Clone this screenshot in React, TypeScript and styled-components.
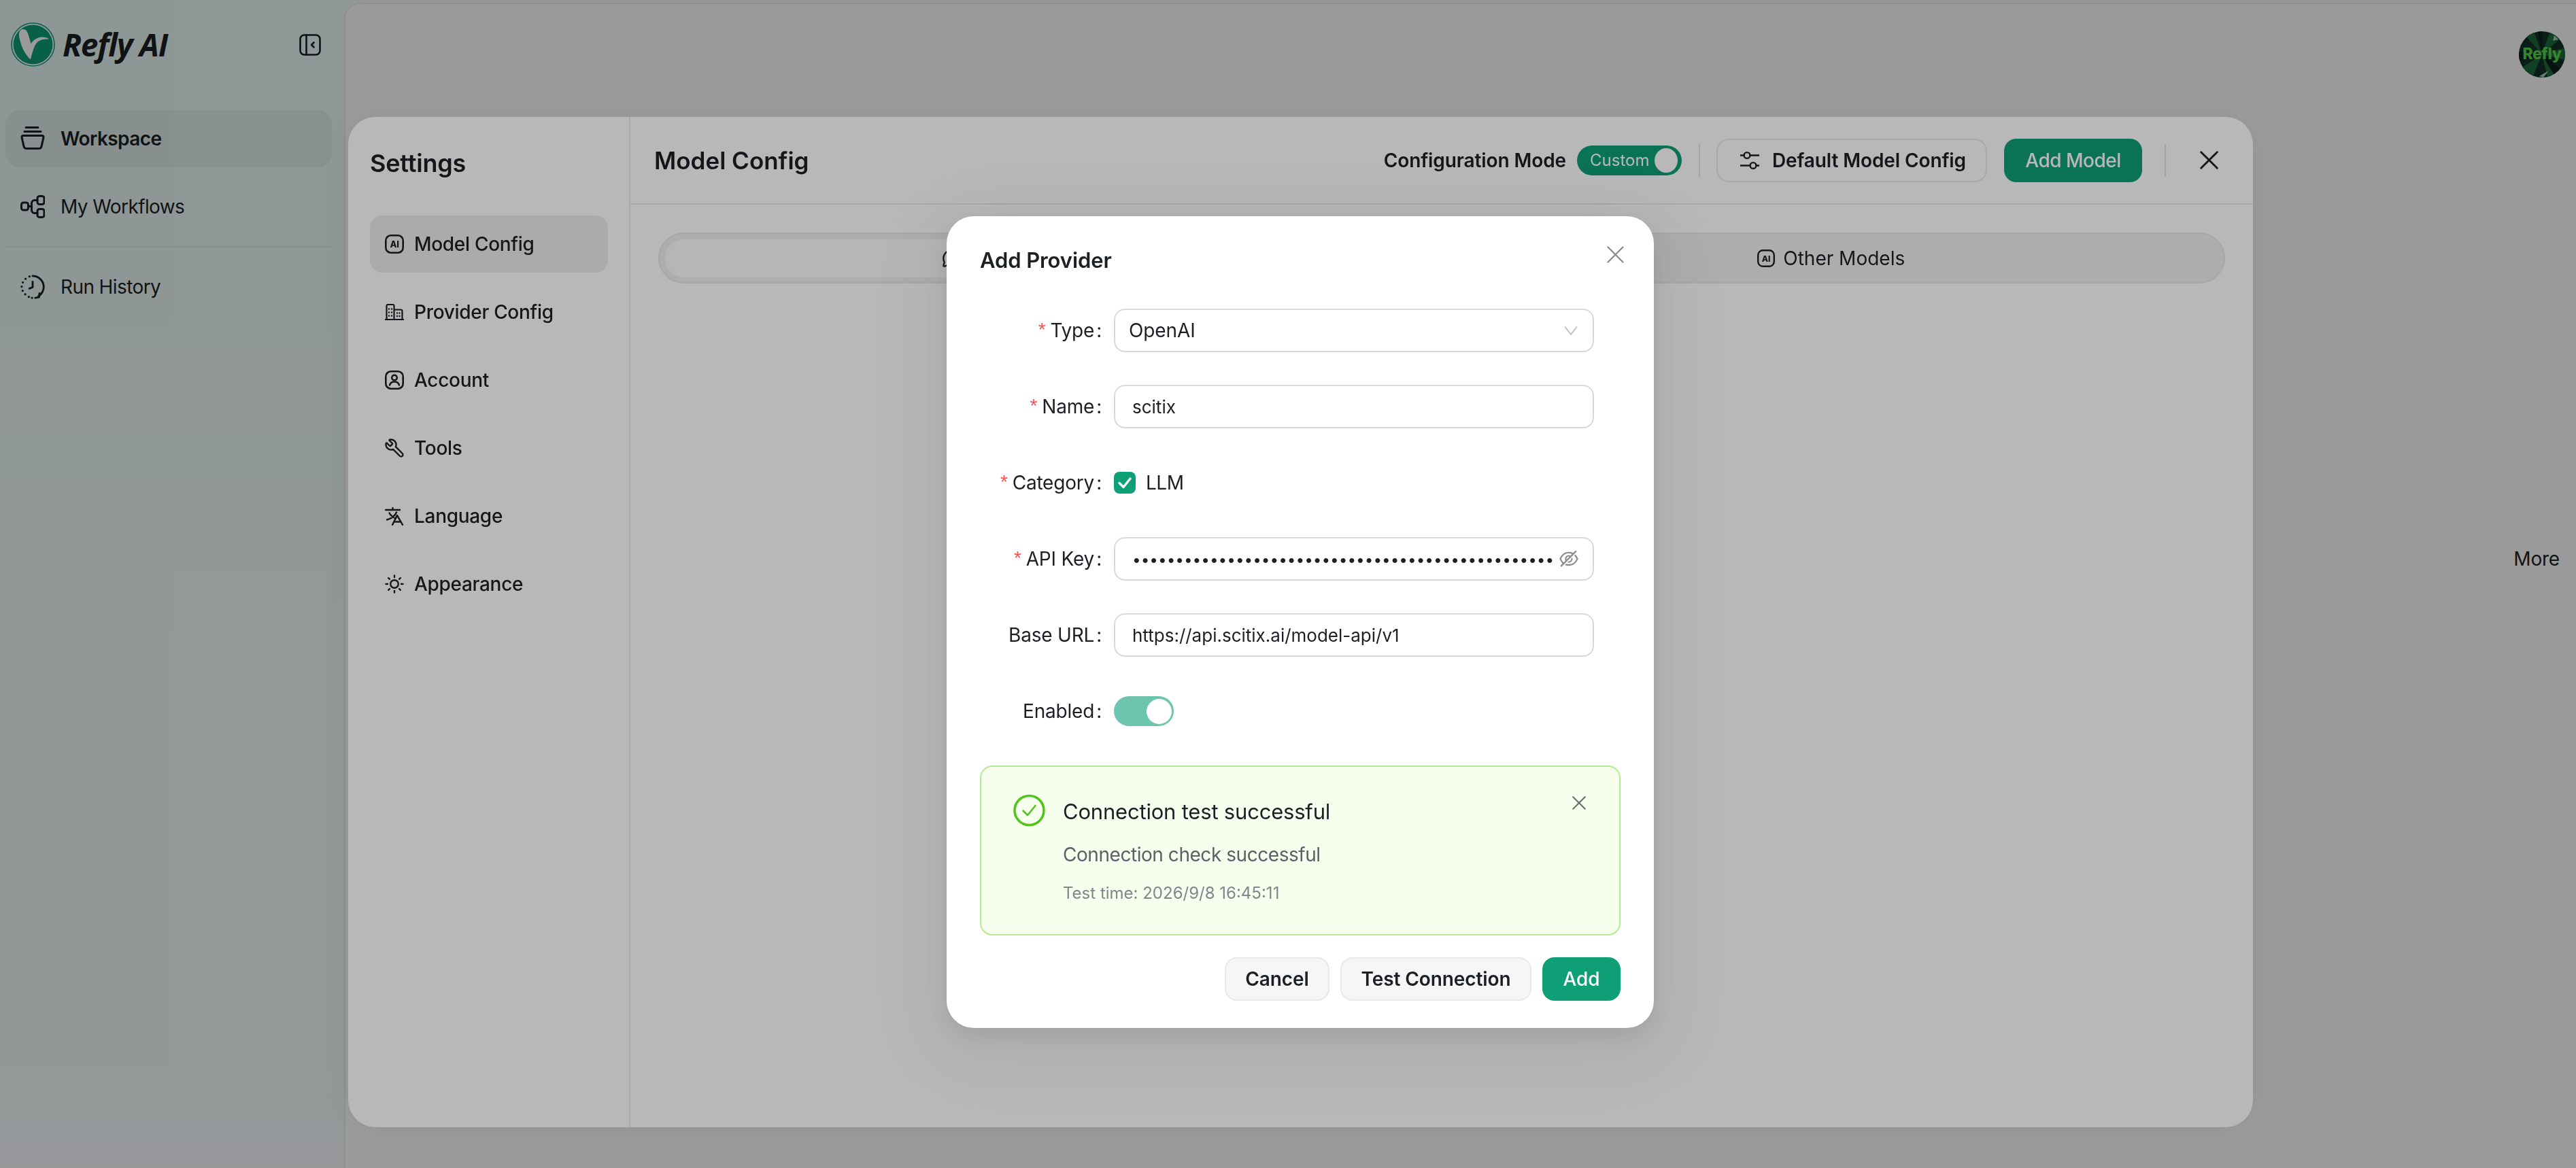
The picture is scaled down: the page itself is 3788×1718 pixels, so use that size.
import React from "react";
import styled, { createGlobalStyle } from "styled-components";
import { Wrench, MessageCircle } from "lucide-react";
import { AiOutlineEyeInvisible } from "react-icons/ai";

const Global = createGlobalStyle`
  html, body { margin: 0; padding: 0; width: 3788px; height: 1718px; overflow: hidden; background: #fff; }
  body { font-family: Inter, "Liberation Sans", sans-serif; color: #1c1f23; -webkit-font-smoothing: antialiased; }
  * { box-sizing: border-box; }
`;

const Page = styled.div`
  width: 3788px;
  height: 1718px;
  display: flex;
  background: linear-gradient(180deg, #e9fbf8 0%, #f3fbfb 60%, #f7fbfd 100%) 0 0 / 530px 100% no-repeat, #f9f9f9;
`;
const Sidebar = styled.aside`
  width: 506px;
  flex: none;
  display: flex;
  flex-direction: column;
  padding: 33px 18px 0 8px;
`;
const Brand = styled.div`
  display: flex;
  align-items: center;
  height: 65px;
  padding-left: 8px;
  margin-bottom: 64px;
`;
const BrandName = styled.span`
  margin-left: 11px;
  font-family: "Open Sans", sans-serif;
  font-style: italic;
  font-weight: 700;
  font-size: 46px;
  letter-spacing: -1.2px;
  line-height: 65px;
  color: #1c1f23;
`;
const Collapse = styled.span`
  margin-left: auto;
  margin-right: 16px;
  display: flex;
`;
const NavItem = styled.div<{ $active?: boolean }>`
  height: 84px;
  border-radius: 20px;
  display: flex;
  align-items: center;
  gap: 23px;
  padding-left: 22px;
  font-size: 28px;
  letter-spacing: -0.6px;
  font-weight: ${(p) => (p.$active ? 600 : 400)};
  background: ${(p) => (p.$active ? "#e0eeed" : "transparent")};
  margin-bottom: 16px;
`;
const NavIconBox = styled.span`
  width: 36px;
  display: flex;
  justify-content: center;
`;
const NavDivider = styled.div`
  height: 2px;
  background: #e3ecec;
  margin: 0 0 16px;
`;
const Main = styled.main`
  flex: 1;
  margin-top: 4px;
  border-top: 2px solid #ebebeb;
  border-left: 2px solid #ebebeb;
  border-top-left-radius: 24px;
  background: #fff;
  display: flex;
  flex-direction: column;
  align-items: flex-end;
  padding: 40px 16px 0 0;
`;
const AvatarSvg = styled.svg`
  width: 68px;
  height: 68px;
  display: block;
`;
const More = styled.div`
  margin-top: 690px;
  margin-right: 8px;
  font-size: 28px;
  line-height: 36px;
  letter-spacing: -0.2px;
`;

const Mask = styled.div<{ $alpha: number }>`
  position: fixed;
  inset: 0;
  background: rgba(0, 0, 0, ${(p) => p.$alpha});
`;
const Settings = styled.section`
  position: absolute;
  left: 512px;
  top: 172px;
  width: 2801px;
  height: 1486px;
  background: #fff;
  border-radius: 40px;
  display: flex;
  box-shadow: 0 0 60px rgba(0, 0, 0, 0.06);
  overflow: hidden;
`;
const SettingsNav = styled.nav`
  width: 415px;
  flex: none;
  border-right: 2px solid #e9e9e9;
  padding: 46px 31px 0 32px;
`;
const SettingsTitle = styled.h2`
  margin: 0 0 55px;
  font-size: 36px;
  line-height: 44px;
  font-weight: 600;
  letter-spacing: -0.2px;
`;
const SettingsItem = styled.div<{ $active?: boolean }>`
  height: 84px;
  border-radius: 18px;
  margin-bottom: 16px;
  display: flex;
  align-items: center;
  gap: 15px;
  padding-left: 22px;
  font-size: 28px;
  font-weight: 500;
  letter-spacing: -0.3px;
  background: ${(p) => (p.$active ? "#eeeeee" : "transparent")};
`;
const IconBox = styled.span`
  width: 28px;
  display: flex;
  align-items: center;
  justify-content: center;
`;
const MirroredIcon = styled.span`
  display: flex;
  transform: scaleX(-1);
`;
const Content = styled.div`
  flex: 1;
  min-width: 0;
  display: flex;
  flex-direction: column;
`;
const Header = styled.header`
  height: 129px;
  flex: none;
  border-bottom: 2px solid #e9e9e9;
  display: flex;
  align-items: center;
  padding: 0 51px 0 35px;
`;
const HeaderTitle = styled.h1`
  margin: 0 auto 0 0;
  font-size: 35px;
  font-weight: 600;
  line-height: 44px;
`;
const ModeLabel = styled.span`
  font-size: 28px;
  font-weight: 600;
  letter-spacing: -0.1px;
  margin-right: 16px;
`;
const ModeSwitch = styled.span`
  width: 154px;
  height: 44px;
  border-radius: 22px;
  background: #0e9f77;
  display: flex;
  align-items: center;
  justify-content: space-between;
  padding: 0 6px 0 19px;
  color: #fff;
  font-size: 24px;
`;
const Knob = styled.span`
  width: 34px;
  height: 36px;
  border-radius: 50%;
  background: #fff;
`;
const VRule = styled.span<{ $ml: number; $mr: number }>`
  width: 2px;
  height: 48px;
  background: #e3e3e3;
  margin: 0 ${(p) => p.$mr}px 0 ${(p) => p.$ml}px;
`;
const OutlineButton = styled.button`
  height: 64px;
  width: 398px;
  padding: 0 0 0 4px;
  border: 2px solid #e9e9e9;
  border-radius: 18px;
  background: #fff;
  display: flex;
  align-items: center;
  justify-content: center;
  gap: 19px;
  font: 600 28px Inter, sans-serif;
  letter-spacing: -0.1px;
  color: #1c1f23;
  margin-right: 25px;
`;
const PrimaryHeaderButton = styled.button`
  height: 64px;
  width: 203px;
  padding: 0;
  border: 0;
  border-radius: 18px;
  background: #0e9f77;
  color: #fff;
  font: 500 28px Inter, sans-serif;
  letter-spacing: -0.5px;
`;
const Tabs = styled.div`
  margin: 41px 41px 0 41px;
  height: 75px;
  border: 2px solid #e8e8e8;
  border-radius: 38px;
  background: #f0f0f0;
  display: flex;
  align-items: center;
  padding: 0 8px;
`;
const Tab = styled.div<{ $active?: boolean }>`
  flex: 1;
  height: 56px;
  border-radius: 28px;
  background: ${(p) => (p.$active ? "#fcfcfc" : "transparent")};
  display: flex;
  align-items: center;
  justify-content: center;
  gap: ${(p) => (p.$active ? 17 : 12)}px;
  padding-left: ${(p) => (p.$active ? 0 : 7)}px;
  font-size: 28px;
`;
const TabSpacer = styled.span`
  width: 279px;
`;

const Dialog = styled.div`
  position: absolute;
  left: 1392px;
  top: 318px;
  width: 1040px;
  height: 1194px;
  background: #fff;
  border-radius: 40px;
  padding: 43px 49px 40px;
  box-shadow: 0 12px 32px rgba(0, 0, 0, 0.08), 0 24px 96px 32px rgba(0, 0, 0, 0.05);
`;
const DialogTitle = styled.h3`
  margin: 0 0 49px;
  font-size: 31px;
  line-height: 44px;
  font-weight: 600;
  letter-spacing: -0.1px;
`;
const DialogClose = styled.span`
  position: absolute;
  left: 971px;
  top: 44px;
  display: flex;
`;
const Form = styled.div`
  display: grid;
  grid-template-columns: 197px 706px;
  grid-auto-rows: 64px;
  row-gap: 48px;
  align-items: center;
`;
const Label = styled.label`
  display: flex;
  justify-content: flex-end;
  padding-right: 18px;
  font-size: 28px;
  letter-spacing: -0.2px;
  color: #1c1f23;
  white-space: nowrap;
`;
const Star = styled.span`
  color: #ff4d4f;
  margin-right: 7px;
  font-family: "Liberation Sans", sans-serif;
`;
const Colon = styled.span`
  margin-left: 3px;
`;
const Field = styled.div`
  height: 64px;
  border: 2px solid #d9d9d9;
  border-radius: 16px;
  display: flex;
  align-items: center;
  background: #fff;
`;
const SelectField = styled(Field)`
  padding: 0 22px 0 20px;
  justify-content: space-between;
  font-size: 28px;
  letter-spacing: -0.1px;
`;
const TextInput = styled.input<{ $size?: number }>`
  flex: 1;
  min-width: 0;
  height: 100%;
  border: 0;
  outline: 0;
  background: transparent;
  padding: 0 0 0 25px;
  font: 400 ${(p) => p.$size ?? 26}px Inter, sans-serif;
  color: #1c1f23;
`;
const EyeWrap = styled.span`
  display: flex;
  color: #8c8c8c;
  margin: 0 19px 0 6px;
`;
const CheckRow = styled.div`
  display: flex;
  align-items: center;
  gap: 15px;
  font-size: 28px;
  letter-spacing: -0.5px;
`;
const CheckBox = styled.span`
  width: 32px;
  height: 32px;
  border-radius: 8px;
  background: #0e9f77;
  display: flex;
  align-items: center;
  justify-content: center;
`;
const Toggle = styled.span`
  width: 88px;
  height: 44px;
  border-radius: 22px;
  background: #6ec5ad;
  display: flex;
  align-items: center;
  justify-content: flex-end;
  padding-right: 3px;
`;
const ToggleKnob = styled.span`
  width: 37px;
  height: 37px;
  border-radius: 50%;
  background: #fff;
`;
const Alert = styled.div`
  position: relative;
  margin-top: 48px;
  height: 250px;
  border: 2px solid #b7eb8f;
  border-radius: 18px;
  background: #f6ffed;
  display: flex;
  gap: 26px;
  padding: 40px 0 0 47px;
`;
const AlertIcon = styled.span`
  flex: none;
  width: 47px;
  height: 48px;
  display: flex;
`;
const AlertBody = styled.div`
  display: flex;
  flex-direction: column;
`;
const AlertTitle = styled.div`
  font-size: 31px;
  line-height: 52px;
  letter-spacing: -0.2px;
  color: #1c1f23;
`;
const AlertMessage = styled.div`
  margin-top: 15px;
  font-size: 28px;
  line-height: 44px;
  letter-spacing: -0.45px;
  color: #5c6166;
`;
const AlertTime = styled.div`
  margin-top: 17px;
  font-size: 24px;
  line-height: 36px;
  color: #7f868c;
`;
const AlertClose = styled.span`
  position: absolute;
  left: 869px;
  top: 43px;
  display: flex;
`;
const Footer = styled.div`
  margin-top: 32px;
  display: flex;
  justify-content: flex-end;
  gap: 16px;
`;
const GhostButton = styled.button<{ $w: number }>`
  width: ${(p) => p.$w}px;
  height: 64px;
  padding: 0;
  border: 2px solid #e8e8e8;
  border-radius: 18px;
  background: #f6f6f6;
  font: 600 28px Inter, sans-serif;
  letter-spacing: -0.1px;
  color: #1c1f23;
`;
const AddButton = styled.button`
  width: 115px;
  height: 64px;
  padding: 0;
  border: 0;
  border-radius: 18px;
  background: #0e9f77;
  color: #fff;
  font: 500 28px Inter, sans-serif;
`;

const Cross = ({ size, color, w = 2.4 }: { size: number; color: string; w?: number }) => (
  <svg width={size} height={size} viewBox="0 0 24 24" fill="none" stroke={color} strokeWidth={w} strokeLinecap="round">
    <path d="M1.5 1.5 22.5 22.5M22.5 1.5 1.5 22.5" />
  </svg>
);

const LogoMark = () => (
  <svg width="65" height="65" viewBox="0 0 65 65">
    <circle cx="32.5" cy="32.5" r="31.5" fill="#fff" stroke="#0e9f77" strokeWidth="1.6" />
    <circle cx="32.5" cy="32.5" r="29" fill="#0e9f77" />
    <path fill="#fff" d="M12 18C12 12 15 10 18 10c4 0 6 3 7 6l4.500 15C33 26 39 21.500 46 21.500c4 0 8 1 10 3-6-.5-12 .5-16 3.500-5 4-8 14-11 26.500-5-4.500-10-11.500-13-19.500C14 29 12 23 12 18Z" />
  </svg>
);
const CollapseIcon = () => (
  <svg width="32" height="32" viewBox="0 0 32 32" fill="none" stroke="#1c1f23" strokeWidth="2.6" strokeLinecap="round" strokeLinejoin="round">
    <rect x="1.5" y="1.5" width="29" height="29" rx="6" />
    <path d="M10.5 1.5v29M21.5 12.5 18 16l3.5 3.5" />
  </svg>
);
const WorkspaceIcon = () => (
  <svg width="36" height="36" viewBox="0 0 36 36" fill="none" stroke="#1c1f23" strokeWidth="3" strokeLinecap="round" strokeLinejoin="round">
    <path d="M8 1.500h18M6 7.500h24M4 13.500h28a2 2 0 0 1 2 2.400l-3 13.400a4 4 0 0 1-3.800 3.200H8.800A4 4 0 0 1 5 29.300L2 15.900a2 2 0 0 1 2-2.400Z" />
  </svg>
);
const WorkflowIcon = () => (
  <svg width="36" height="34" viewBox="0 0 36 34" fill="none" stroke="#1c1f23" strokeWidth="3" strokeLinecap="round" strokeLinejoin="round">
    <rect x="1.5" y="11" width="10" height="11" rx="3" />
    <rect x="25" y="1.5" width="10" height="12" rx="3" />
    <rect x="25" y="20.5" width="10" height="12" rx="3" />
    <path d="M11.500 16.500h5M25 7.500h-4a4.500 4.500 0 0 0-4.500 4.500v10a4.500 4.500 0 0 0 4.500 4.500h4" />
  </svg>
);
const HistoryIcon = () => (
  <svg width="38" height="38" viewBox="0 0 38 38" fill="none" stroke="#1c1f23" strokeWidth="3" strokeLinecap="round" strokeLinejoin="round">
    <path d="M19 2a17 17 0 0 1 9 31.500" />
    <path d="M23 36l6-1 .6-6" />
    <path d="M14 2.800h.01M8 6.500h.01M3.800 12h.01M2 18.500h.01M3.500 25h.01M7.500 30.500h.01M13 34.500h.01M18 36h.01" strokeWidth="3.4" />
    <path d="M19 11v8.500l-5 2" />
  </svg>
);
const AiIcon = ({ size = 28 }: { size?: number }) => (
  <svg width={size} height={size} viewBox="0 0 28 28" fill="none">
    <rect x="1.3" y="1.3" width="25.4" height="25.4" rx="7.500" stroke="#1c1f23" strokeWidth="2.6" />
    <text x="14" y="19" textAnchor="middle" fontFamily="Inter, sans-serif" fontWeight="800" fontSize="13" fill="#1c1f23">AI</text>
  </svg>
);
const BuildingIcon = () => (
  <svg width="28" height="24" viewBox="0 0 28 24" fill="none" stroke="#1c1f23" strokeWidth="2.2" strokeLinecap="round" strokeLinejoin="round">
    <path d="M.5 23h27M2.500 23V3a2 2 0 0 1 2-2h7a2 2 0 0 1 2 2v20M13.500 8.500h10a2 2 0 0 1 2 2V23" />
    <path d="M6 7.500h.01M10 7.500h.01M6 12.500h.01M10 12.500h.01M6 17.500h.01M10 17.500h.01M18 13.500h.01M21.500 13.500h.01M18 18h.01M21.500 18h.01" strokeWidth="2.4" />
  </svg>
);
const AccountIcon = () => (
  <svg width="28" height="28" viewBox="0 0 28 28" fill="none" stroke="#1c1f23" strokeWidth="2.6" strokeLinecap="round">
    <rect x="1.300" y="1.300" width="25.400" height="25.400" rx="7.500" />
    <circle cx="14" cy="10.500" r="3.800" />
    <path d="M7 21.500c1-3.500 3.500-5 7-5s6 1.500 7 5" />
  </svg>
);
const LanguageIcon = () => (
  <svg width="28" height="27" viewBox="0 0 28 27" fill="none" stroke="#1c1f23" strokeWidth="2.4" strokeLinecap="round" strokeLinejoin="round">
    <path d="M1 4h21M11.500 1v3M6.500 8.500c2 4 6 6.500 9.500 8M17 7.500c-2 5-7 9-14 11" />
    <path d="M11 26l7-14 8 14M13.500 21.500h10" />
  </svg>
);
const SunIcon = () => (
  <svg width="28" height="28" viewBox="0 0 28 28" fill="none" stroke="#1c1f23" strokeWidth="2.4" strokeLinecap="round">
    <circle cx="14" cy="14" r="5.800" />
    <path d="M14 1.500v2.500M14 24v2.500M1.500 14H4M24 14h2.500M5.200 5.200l1.700 1.700M21.100 21.100l1.700 1.700M5.200 22.800l1.700-1.700M21.100 6.900l1.700-1.700" />
  </svg>
);
const SlidersIcon = () => (
  <svg width="28" height="28" viewBox="0 0 28 28" fill="none" stroke="#1c1f23" strokeWidth="2.4" strokeLinecap="round">
    <circle cx="10" cy="6.500" r="4.400" />
    <circle cx="19" cy="21.500" r="4.400" />
    <path d="M.5 6.500h5M14.500 6.500H27.500M.5 21.500h14M23.500 21.500h4" />
  </svg>
);
const SuccessIcon = () => (
  <svg width="47" height="48" viewBox="0 0 47 48" fill="none" stroke="#52c41a">
    <circle cx="23.5" cy="24" r="21.500" strokeWidth="3.6" />
    <path d="M14.500 24.500 21 31l11.500-14" strokeWidth="2.6" strokeLinecap="round" strokeLinejoin="round" />
  </svg>
);
const Chevron = () => (
  <svg width="20" height="15" viewBox="0 0 20 15" fill="none" stroke="#bfbfbf" strokeWidth="2" strokeLinecap="round" strokeLinejoin="round">
    <path d="M1.500 2 10 13l8.500-11" />
  </svg>
);
const Check = () => (
  <svg width="22" height="20" viewBox="0 0 22 20" fill="none" stroke="#fff" strokeWidth="3.4" strokeLinecap="round" strokeLinejoin="round">
    <path d="M3 10.500 9 16.500 19 4" />
  </svg>
);
const AvatarArt = () => (
  <AvatarSvg viewBox="0 0 68 68">
    <defs>
      <clipPath id="av"><circle cx="34" cy="34" r="34" /></clipPath>
    </defs>
    <g clipPath="url(#av)">
      <rect width="68" height="68" fill="#12302a" />
      <path d="M34 34 8 4 22 0ZM34 34 46 0 62 10ZM34 34 68 24 68 42ZM34 34 20 68 4 54ZM34 34 56 68 42 68Z" fill="#1f6b3e" />
      <path d="M34 34 0 30 0 44ZM34 34 34 0 28 0ZM34 34 66 60 54 68Z" fill="#0b1f18" />
      <path d="M30 66 44 58 36 68ZM52 6 58 12 50 14Z" fill="#9fd8b0" />
      <text x="34" y="41" textAnchor="middle" fontFamily="Inter, sans-serif" fontWeight="800" fontSize="23" letterSpacing="-0.4" fill="#5ad94e">Refly</text>
    </g>
  </AvatarSvg>
);

const FormLabel = ({ text, required }: { text: string; required?: boolean }) => (
  <Label>
    {required && <Star>*</Star>}
    {text}
    <Colon>:</Colon>
  </Label>
);

export default function App() {
  return (
    <>
      <Global />
      <Page>
        <Sidebar>
          <Brand>
            <LogoMark />
            <BrandName>Refly AI</BrandName>
            <Collapse><CollapseIcon /></Collapse>
          </Brand>
          <NavItem $active><NavIconBox><WorkspaceIcon /></NavIconBox>Workspace</NavItem>
          <NavItem><NavIconBox><WorkflowIcon /></NavIconBox>My Workflows</NavItem>
          <NavDivider />
          <NavItem><NavIconBox><HistoryIcon /></NavIconBox>Run History</NavItem>
        </Sidebar>
        <Main>
          <AvatarArt />
          <More>More</More>
        </Main>
      </Page>
      <Mask $alpha={0.16}>
        <Settings>
          <SettingsNav>
            <SettingsTitle>Settings</SettingsTitle>
            <SettingsItem $active><IconBox><AiIcon /></IconBox>Model Config</SettingsItem>
            <SettingsItem><IconBox><BuildingIcon /></IconBox>Provider Config</SettingsItem>
            <SettingsItem><IconBox><AccountIcon /></IconBox>Account</SettingsItem>
            <SettingsItem><IconBox><MirroredIcon><Wrench size={30} strokeWidth={1.9} color="#1c1f23" /></MirroredIcon></IconBox>Tools</SettingsItem>
            <SettingsItem><IconBox><LanguageIcon /></IconBox>Language</SettingsItem>
            <SettingsItem><IconBox><SunIcon /></IconBox>Appearance</SettingsItem>
          </SettingsNav>
          <Content>
            <Header>
              <HeaderTitle>Model Config</HeaderTitle>
              <ModeLabel>Configuration Mode</ModeLabel>
              <ModeSwitch>Custom<Knob /></ModeSwitch>
              <VRule $ml={25} $mr={24} />
              <OutlineButton><SlidersIcon />Default Model Config</OutlineButton>
              <PrimaryHeaderButton>Add Model</PrimaryHeaderButton>
              <VRule $ml={33} $mr={50} />
              <Cross size={27} color="#1c1f23" w={2.6} />
            </Header>
            <Tabs>
              <Tab $active><MessageCircle size={28} strokeWidth={2} color="#1c1f23" /><TabSpacer /></Tab>
              <Tab><AiIcon size={26} />Other Models</Tab>
            </Tabs>
          </Content>
        </Settings>
      </Mask>
      <Mask $alpha={0.28}>
        <Dialog>
          <DialogTitle>Add Provider</DialogTitle>
          <DialogClose><Cross size={25} color="#8a8a8a" w={2.2} /></DialogClose>
          <Form>
            <FormLabel text="Type" required />
            <SelectField>OpenAI<Chevron /></SelectField>
            <FormLabel text="Name" required />
            <Field><TextInput readOnly value="scitix" /></Field>
            <FormLabel text="Category" required />
            <CheckRow><CheckBox><Check /></CheckBox>LLM</CheckRow>
            <FormLabel text="API Key" required />
            <Field>
              <TextInput readOnly type="password" $size={22.5} value={"x".repeat(80)} />
              <EyeWrap><AiOutlineEyeInvisible size={32} /></EyeWrap>
            </Field>
            <FormLabel text="Base URL" />
            <Field><TextInput readOnly value="https://api.scitix.ai/model-api/v1" /></Field>
            <FormLabel text="Enabled" />
            <Toggle><ToggleKnob /></Toggle>
          </Form>
          <Alert>
            <AlertIcon><SuccessIcon /></AlertIcon>
            <AlertBody>
              <AlertTitle>Connection test successful</AlertTitle>
              <AlertMessage>Connection check successful</AlertMessage>
              <AlertTime>Test time: 2026/9/8 16:45:11</AlertTime>
            </AlertBody>
            <AlertClose><Cross size={20} color="#6f6f6f" w={2.6} /></AlertClose>
          </Alert>
          <Footer>
            <GhostButton $w={154}>Cancel</GhostButton>
            <GhostButton $w={281}>Test Connection</GhostButton>
            <AddButton>Add</AddButton>
          </Footer>
        </Dialog>
      </Mask>
    </>
  );
}
